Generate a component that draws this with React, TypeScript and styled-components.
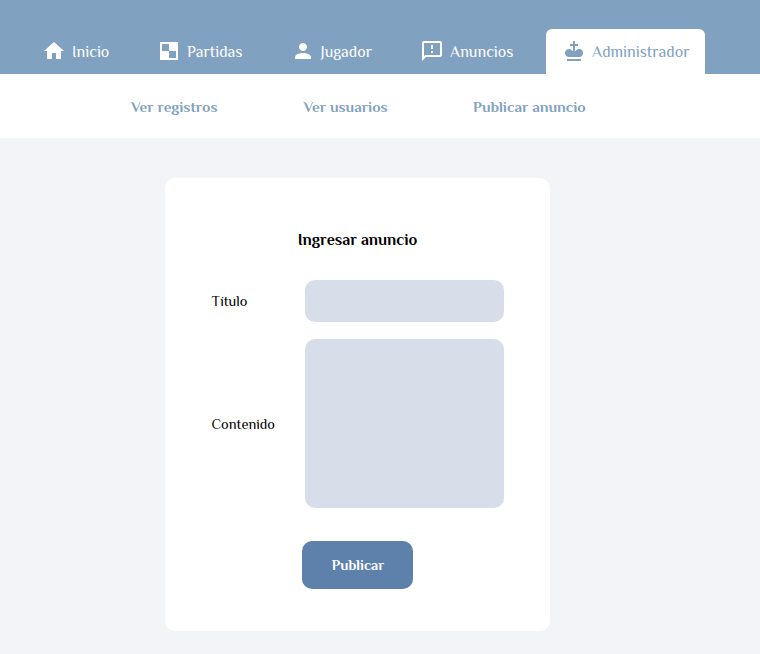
import React from 'react';
import styled, { createGlobalStyle } from 'styled-components';

const GlobalStyle = createGlobalStyle`
  * { box-sizing: border-box; }
  body {
    margin: 0;
    background: #f2f4f8;
    color: #000;
    font-family: Philosopher, "Noto Sans", sans-serif;
  }
`;

const Page = styled.div`
  min-height: 654px;
`;

const TopBar = styled.nav`
  display: flex;
  align-items: flex-end;
  height: 74px;
  padding-left: 26px;
  background: #81a1c1;
`;

const Tab = styled.a<{ $active?: boolean; $width: number }>`
  display: flex;
  align-items: center;
  gap: 6px;
  width: ${p => p.$width}px;
  height: 45px;
  padding: 0 0 1px 16px;
  border-radius: 6px 6px 0 0;
  background: ${p => (p.$active ? '#fff' : 'transparent')};
  color: ${p => (p.$active ? '#81a1c1' : '#fff')};
  font-size: 16px;
  line-height: 20px;
  white-space: nowrap;
`;

const TabLabel = styled.span`
  padding-top: 2px;
`;

const Icon = styled.svg`
  flex: none;
  width: 24px;
  height: 24px;
  fill: currentColor;
`;

const SubBar = styled.nav`
  display: flex;
  align-items: center;
  height: 64px;
  padding-left: 131px;
  background: #fff;
`;

const SubLink = styled.a<{ $width?: number }>`
  width: ${p => (p.$width ? `${p.$width}px` : 'auto')};
  padding-top: 2px;
  color: #81a1c1;
  font-size: 15.2px;
  font-weight: 700;
  line-height: 20px;
  white-space: nowrap;
`;

const Card = styled.form`
  display: flex;
  flex-direction: column;
  align-items: center;
  width: 385px;
  height: 453px;
  margin: 40px 0 0 165px;
  padding: 52px 46px 42px;
  border-radius: 10px;
  background: #fff;
`;

const Heading = styled.h1`
  margin: 0 0 30px;
  font-size: 16px;
  line-height: 20px;
`;

const Fields = styled.div`
  display: grid;
  grid-template-columns: 94px 199px;
  grid-template-rows: 42px 169px;
  row-gap: 17px;
  align-items: center;
`;

const Label = styled.label`
  padding-left: 0.5px;
  font-size: 14.4px;
  line-height: 18px;
`;

const TextInput = styled.input`
  width: 100%;
  height: 100%;
  padding: 10px;
  border: 0;
  border-radius: 10px;
  background: #d8dee9;
  font: inherit;
`;

const TextArea = styled.textarea`
  display: block;
  width: 100%;
  height: 100%;
  padding: 10px;
  border: 0;
  border-radius: 10px;
  background: #d8dee9;
  font: inherit;
  resize: none;
`;

const Submit = styled.button`
  width: 111px;
  height: 48px;
  margin-top: 33px;
  padding: 0 0 0 1px;
  border: 0;
  border-radius: 10px;
  background: #5e81ac;
  color: #fff;
  font-family: inherit;
  font-size: 14.4px;
  font-weight: 700;
`;

const tabs = [
  { label: 'Inicio', width: 115, path: 'M10 20v-6h4v6h5v-8h3L12 3 2 12h3v8z' },
  { label: 'Partidas', width: 133.5, path: 'M3 3h18v18H3zM5 5v7h7v7h7v-7h-7V5z' },
  {
    label: 'Jugador', width: 129.5,
    path: 'M12 12c2.21 0 4-1.79 4-4s-1.79-4-4-4-4 1.79-4 4 1.79 4 4 4zm0 2c-2.67 0-8 1.34-8 4v2h16v-2c0-2.66-5.33-4-8-4z',
  },
  {
    label: 'Anuncios', width: 142,
    path: 'M20 2H4c-1.1 0-1.99.9-1.99 2L2 22l4-4h14c1.1 0 2-.9 2-2V4c0-1.1-.9-2-2-2zm0 14H5.17L4 17.17V4h16v12zM11 12h2v2h-2zM11 6h2v4h-2z',
  },
  {
    label: 'Administrador', width: 159, active: true,
    path: 'M19 22H5v-2h14v2M17 10c-1.42 0-2.74.77-3.45 2H13V7h3V5h-3V2h-2v3H8v2h3v5h-.55C9.35 10.09 6.91 9.43 5 10.54 3.07 11.64 2.42 14.09 3.5 16 4.24 17.24 5.57 18 7 18h10a4 4 0 0 0 4-4 4 4 0 0 0-4-4z',
  },
];

export default function App() {
  return (
    <Page>
      <GlobalStyle />
      <TopBar>
        {tabs.map(t => (
          <Tab key={t.label} $active={t.active} $width={t.width}>
            <Icon viewBox="0 0 24 24"><path fillRule="evenodd" d={t.path} /></Icon>
            <TabLabel>{t.label}</TabLabel>
          </Tab>
        ))}
      </TopBar>
      <SubBar>
        <SubLink $width={172.5}>Ver registros</SubLink>
        <SubLink $width={169.5}>Ver usuarios</SubLink>
        <SubLink>Publicar anuncio</SubLink>
      </SubBar>
      <Card>
        <Heading>Ingresar anuncio</Heading>
        <Fields>
          <Label htmlFor="titulo">Título</Label>
          <TextInput id="titulo" />
          <Label htmlFor="contenido">Contenido</Label>
          <TextArea id="contenido" />
        </Fields>
        <Submit type="button">Publicar</Submit>
      </Card>
    </Page>
  );
}
